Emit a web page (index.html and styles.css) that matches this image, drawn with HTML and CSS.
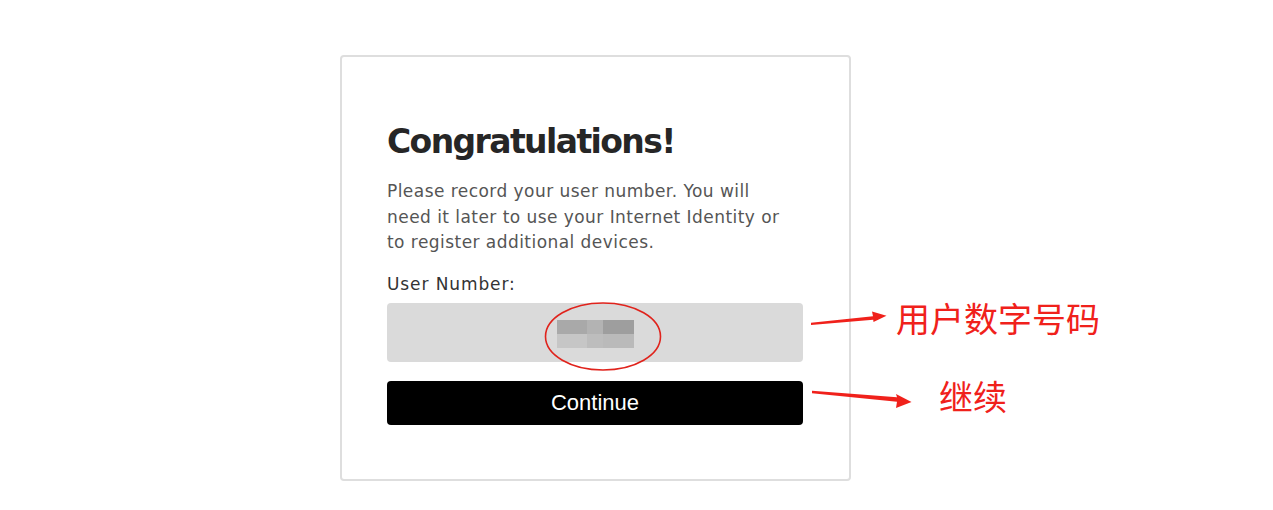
FILE: index.html
```html
<!DOCTYPE html>
<html lang="en">
<head>
<meta charset="utf-8">
<title>Congratulations</title>
<link rel="stylesheet" href="styles.css">
</head>
<body>
<div class="page">
  <div class="card">
    <h1 class="title">Congratulations!</h1>
    <p class="desc">Please record your user number. You will need it later to use your Internet Identity or to register additional devices.</p>
    <div class="label">User Number:</div>
    <div class="number-box">
      <div class="blur">
        <div class="blur-row">
          <span class="px px-a"></span><span class="px px-b"></span><span class="px px-c"></span>
        </div>
        <div class="blur-row">
          <span class="px px-d"></span><span class="px px-e"></span><span class="px px-f"></span>
        </div>
      </div>
    </div>
    <button class="continue">Continue</button>
  </div>
</div>
<svg class="annot" width="1273" height="510" viewBox="0 0 1273 510">
  <ellipse cx="603" cy="336.5" rx="57.5" ry="33.5" fill="none" stroke="#e0231c" stroke-width="1.6"/>
  <path d="M811 322.8 L873 316.2 L872 311.5 L886.5 315.8 L873.5 322 L873.2 319.8 L811 325 Z" fill="#f0211b"/>
  <path d="M812 390.8 L897 397.2 L896 394 L911.5 402 L896 408 L897 401.8 L812 393.2 Z" fill="#f0211b"/>
</svg>
<div class="note note-1">用户数字号码</div>
<div class="note note-2">继续</div>
</body>
</html>
```
FILE: styles.css
```css
html, body {
  margin: 0;
  padding: 0;
  background: #ffffff;
}
body {
  width: 1273px;
  height: 510px;
  position: relative;
  overflow: hidden;
  font-family: "DejaVu Sans", sans-serif;
}
.page {
  padding: 55px 0 0 340px;
}
.card {
  box-sizing: border-box;
  width: 511px;
  height: 426px;
  border: 2px solid #dedede;
  border-radius: 4px;
  padding: 65px 46px 0 45px;
  display: flex;
  flex-direction: column;
}
.title {
  margin: 0;
  font-family: "DejaVu Sans", sans-serif;
  font-weight: bold;
  font-size: 33px;
  line-height: 40px;
  color: #262626;
  letter-spacing: -1.6px;
}
.desc {
  margin: 17px 0 0;
  max-width: 400px;
  font-family: "DejaVu Sans", sans-serif;
  font-size: 17px;
  letter-spacing: 0.45px;
  line-height: 25.5px;
  color: #555555;
}
.label {
  margin-top: 17px;
  font-family: "DejaVu Sans", sans-serif;
  font-size: 17px;
  letter-spacing: 0.9px;
  line-height: 22px;
  color: #333333;
}
.number-box {
  margin-top: 8px;
  height: 59px;
  background: #dadada;
  border-radius: 4px;
  display: flex;
  justify-content: center;
  align-items: center;
}
.blur {
  display: flex;
  flex-direction: column;
  margin: 4px 0 0 0;
}
.blur-row {
  display: flex;
}
.px {
  display: block;
  height: 14px;
}
.px-a { width: 30px; background: #a9a9a9; }
.px-b { width: 16px; background: #b3b3b3; }
.px-c { width: 31px; background: #9e9e9e; }
.px-d { width: 30px; background: #c6c6c6; }
.px-e { width: 16px; background: #bdbdbd; }
.px-f { width: 31px; background: #bababa; }
.continue {
  margin-top: 19px;
  height: 44px;
  border: none;
  border-radius: 4px;
  background: #000000;
  color: #ffffff;
  font-family: "Liberation Sans", Arial, sans-serif;
  font-size: 22px;
  padding: 0;
  cursor: pointer;
}
.annot {
  position: absolute;
  left: 0;
  top: 0;
  pointer-events: none;
}
.note {
  position: absolute;
  font-family: "Noto Sans CJK SC", sans-serif;
  font-size: 34px;
  line-height: 40px;
  color: #f0211b;
}
.note-1 {
  left: 896px;
  top: 298px;
}
.note-2 {
  left: 939px;
  top: 376px;
}
```
